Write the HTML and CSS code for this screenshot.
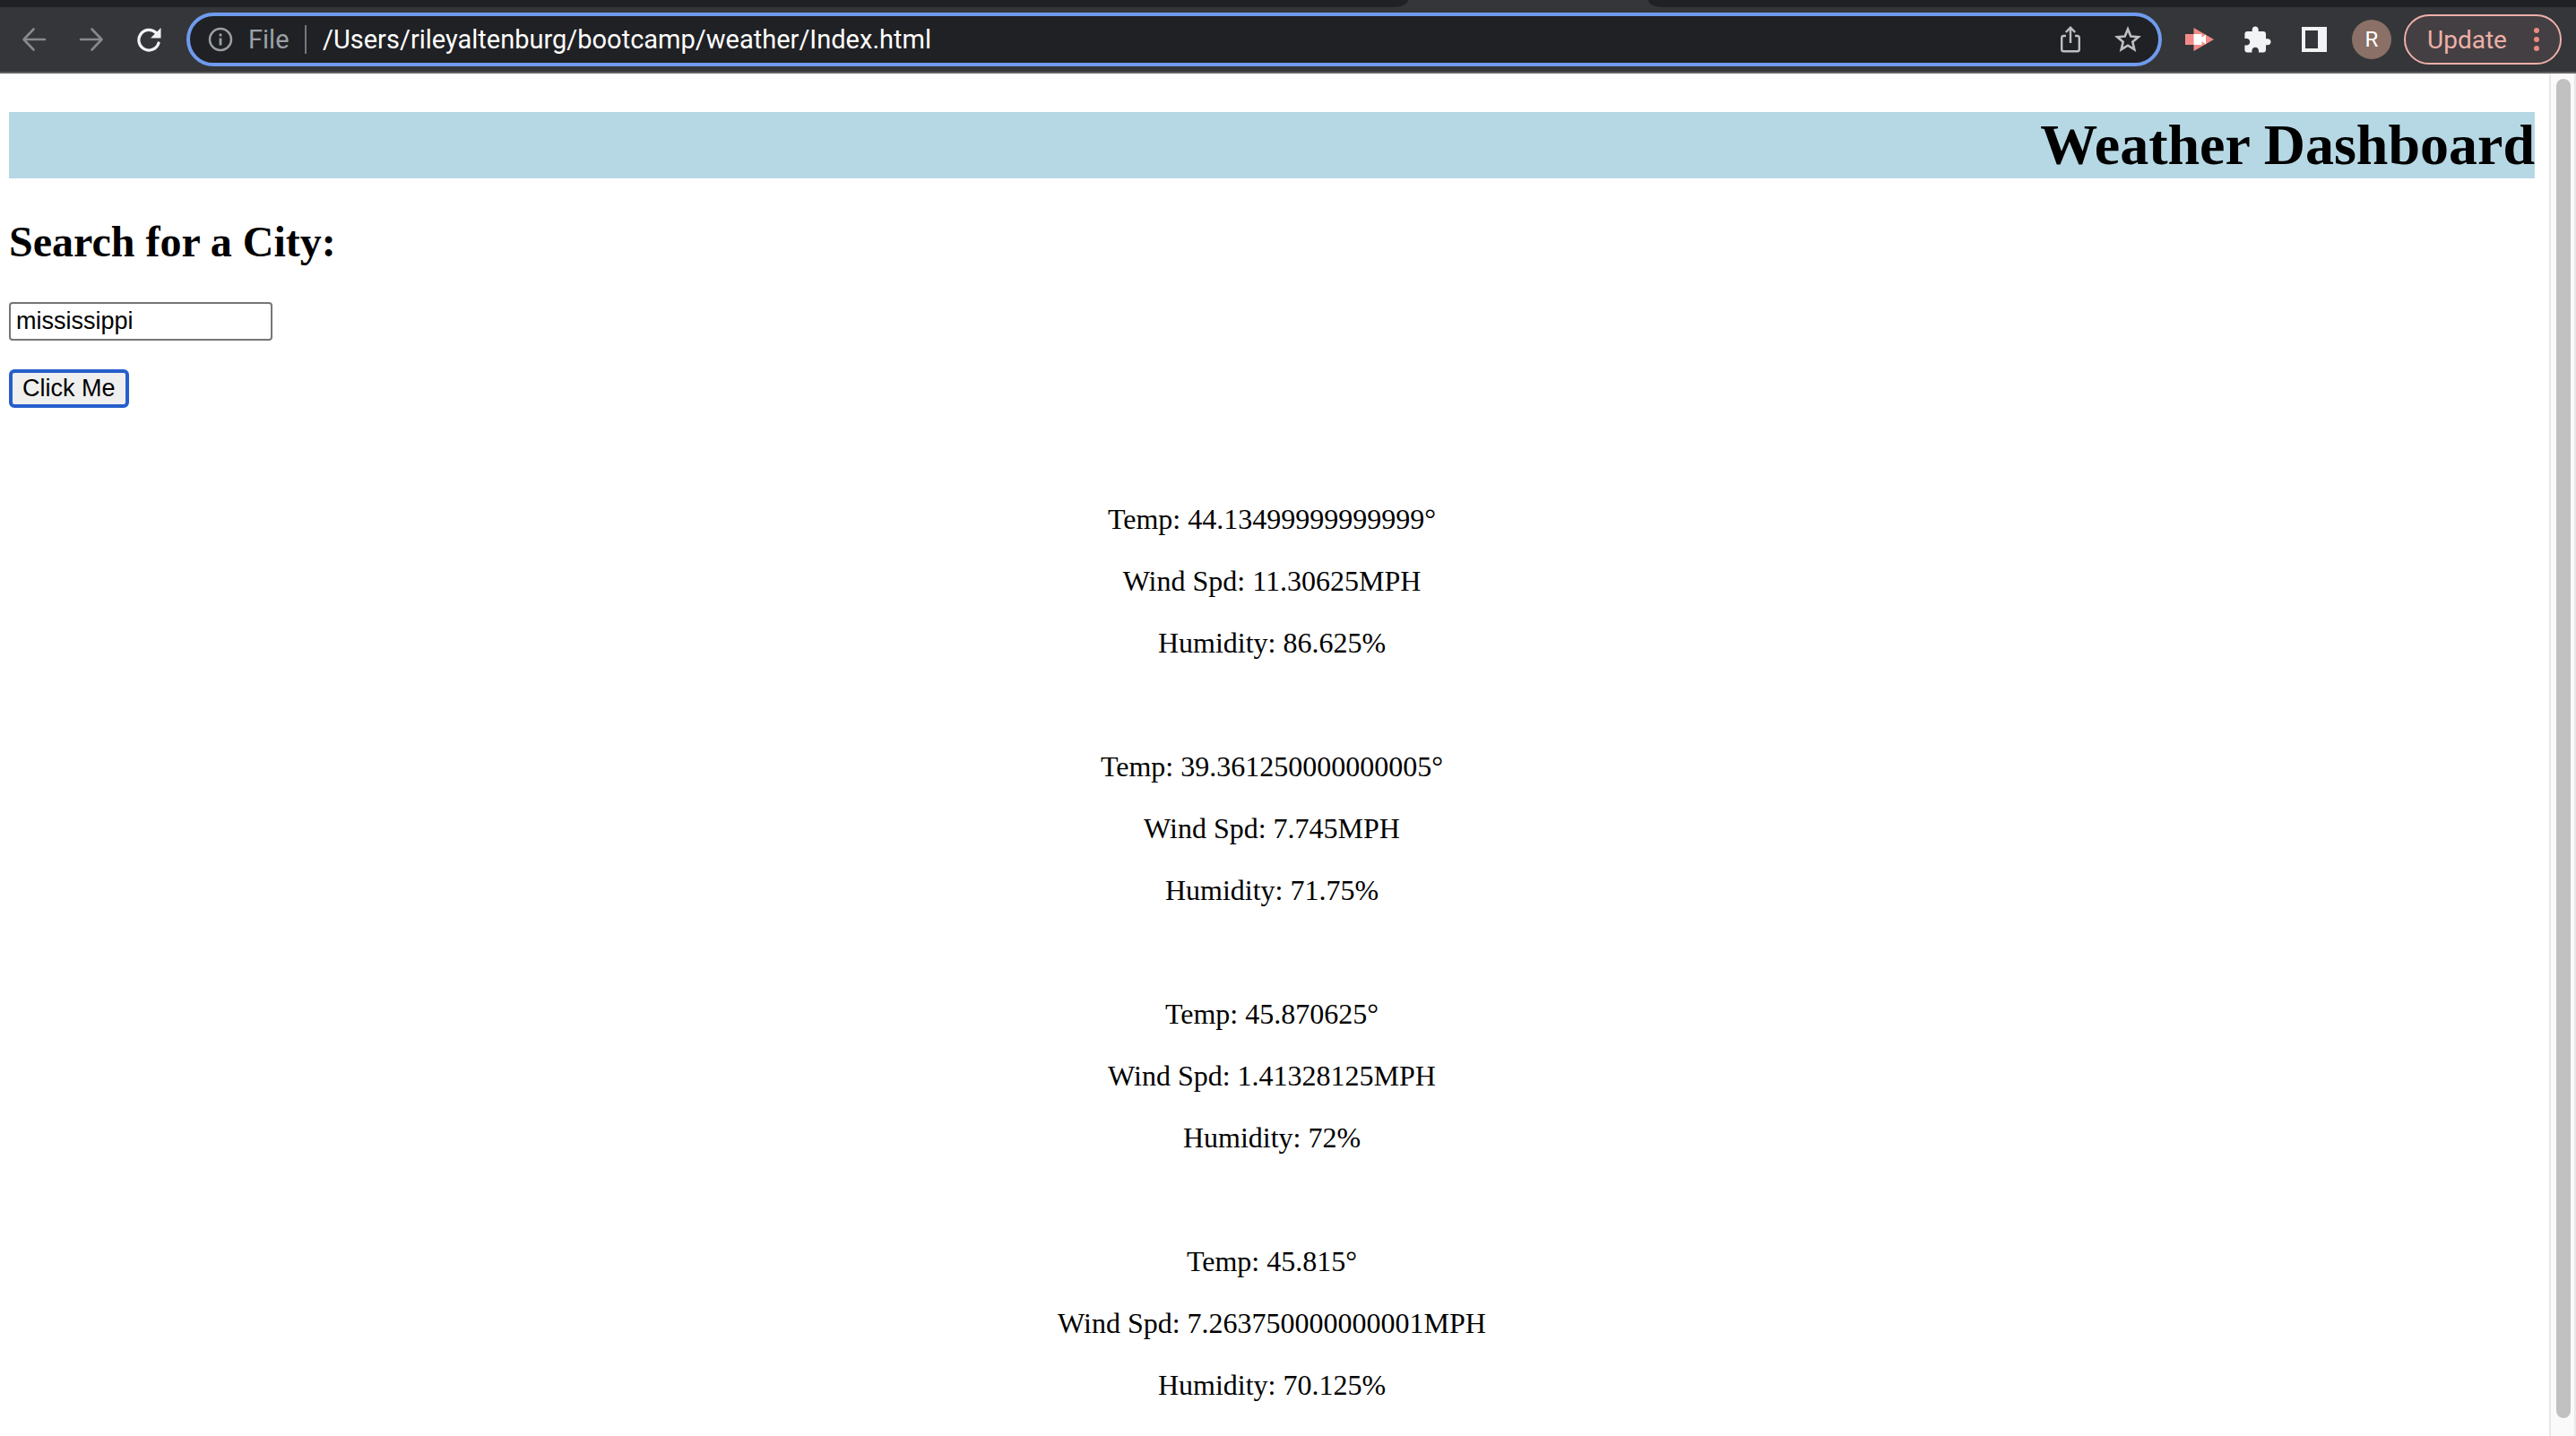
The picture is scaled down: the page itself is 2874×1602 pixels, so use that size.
FILE: index.html
```html
<!DOCTYPE html>
<html lang="en">
<head>
<meta charset="utf-8">
<title>Weather Dashboard</title>
<link rel="stylesheet" href="styles.css">
</head>
<body>
<div class="browser">
  <div class="tab-strip">
    <div class="tabs tabs-left"></div>
    <div class="tabs tabs-right"></div>
  </div>
  <header class="toolbar">
    <nav class="nav-buttons" aria-label="Navigation">
      <button class="icon-button" type="button" aria-label="Back" disabled>
        <svg width="28" height="28" viewBox="0 0 28 28" fill="none" stroke="#88898c" stroke-width="2.600" stroke-linecap="round" stroke-linejoin="round"><path d="M26 14H3M13.500 2.500L2.500 14L13.500 25.500"/></svg>
      </button>
      <button class="icon-button" type="button" aria-label="Forward" disabled>
        <svg width="28" height="28" viewBox="0 0 28 28" fill="none" stroke="#88898c" stroke-width="2.600" stroke-linecap="round" stroke-linejoin="round"><path d="M2 14H25M14.500 2.500L25.500 14L14.500 25.500"/></svg>
      </button>
      <button class="icon-button" type="button" aria-label="Reload">
        <svg width="28" height="28" viewBox="0 0 28 28"><path d="M22 6.500A11.300 11.300 0 1 0 25 18" fill="none" stroke="#f1f3f4" stroke-width="3.200" stroke-linecap="round"/><path d="M27.500 1V12.500H16Z" fill="#f1f3f4"/></svg>
      </button>
    </nav>
    <div class="omnibox">
      <svg class="info" width="28" height="28" viewBox="0 0 28 28"><circle cx="14" cy="14" r="12" fill="none" stroke="#9aa0a6" stroke-width="2.500"/><path d="M12.600 7.500h2.800v3h-2.800zM12.600 12.500h2.800v8h-2.800z" fill="#9aa0a6"/></svg>
      <label class="scheme" for="url">File</label>
      <span class="divider"></span>
      <input class="url" id="url" type="text" value="/Users/rileyaltenburg/bootcamp/weather/Index.html">
      <button class="icon-button" type="button" aria-label="Share">
        <svg width="28" height="32" viewBox="0 0 28 32" fill="none" stroke="#bdbec0" stroke-width="2.400"><path d="M9 12H6.500Q4.200 12 4.200 14.300V27Q4.200 29.300 6.500 29.300H21.500Q23.800 29.300 23.800 27V14.300Q23.800 12 21.500 12H19M14 20V3.500M8.800 8L14 2.800L19.200 8"/></svg>
      </button>
      <button class="icon-button" type="button" aria-label="Bookmark">
        <svg width="30" height="32" viewBox="0 0 30 32" fill="none" stroke="#bdbec0" stroke-width="2.600"><path d="M15 4.500L18.300 12.500L26.800 13.200L20.300 18.800L22.300 27.200L15 22.700L7.700 27.200L9.700 18.800L3.200 13.200L11.700 12.500Z"/></svg>
      </button>
    </div>
    <div class="extensions">
      <button class="icon-button" type="button" aria-label="Screen recorder">
        <svg width="32" height="28" viewBox="0 0 32 28"><path d="M0 8H10V20H0ZM9.500 1L32 14L9.500 27Z" fill="#f28b87"/><path d="M9.500 8H18.500V12L23 8.500V19.500L18.500 16V20H9.500Z" fill="#fff"/></svg>
      </button>
      <button class="icon-button" type="button" aria-label="Extensions">
        <svg width="32" height="32" viewBox="1 0 23 23" fill="#f1f3f4"><path d="M20.500 11H19V7c0-1.100-.9-2-2-2h-4V3.500C13 2.120 11.880 1 10.500 1S8 2.120 8 3.500V5H4c-1.100 0-1.990.9-1.990 2v3.800H3.500c1.490 0 2.700 1.210 2.700 2.700s-1.210 2.700-2.700 2.700H2V20c0 1.100.9 2 2 2h3.800v-1.500c0-1.490 1.210-2.700 2.700-2.700s2.700 1.210 2.700 2.700V22H17c1.100 0 2-.9 2-2v-4h1.500c1.380 0 2.500-1.120 2.500-2.500S21.880 11 20.500 11z"/></svg>
      </button>
      <button class="icon-button panel-button" type="button" aria-label="Side panel">
        <svg width="28" height="28" viewBox="0 0 28 28"><path d="M0 0H28V28H0ZM4 4V24H18V4Z" fill="#f1f3f4" fill-rule="evenodd"/></svg>
      </button>
      <button class="avatar" type="button" aria-label="Profile R">R</button>
      <button class="update" type="button"><span>Update</span>
        <svg width="6" height="28" viewBox="0 0 6 28" fill="#e98b80"><circle cx="3" cy="4" r="3"/><circle cx="3" cy="14" r="3"/><circle cx="3" cy="24" r="3"/></svg>
      </button>
    </div>
  </header>
  <div class="viewport">
    <main class="page">
      <h1 class="title">Weather Dashboard</h1>
      <h2 class="search-title"><label for="city">Search for a City:</label></h2>
      <form class="search">
        <input class="city" id="city" type="text" value="mississippi">
        <button class="search-button" type="button">Click Me</button>
      </form>
      <div class="forecast">
        <section class="day">
          <p>Temp: 44.13499999999999°</p>
          <p>Wind Spd: 11.30625MPH</p>
          <p>Humidity: 86.625%</p>
        </section>
        <section class="day">
          <p>Temp: 39.361250000000005°</p>
          <p>Wind Spd: 7.745MPH</p>
          <p>Humidity: 71.75%</p>
        </section>
        <section class="day">
          <p>Temp: 45.870625°</p>
          <p>Wind Spd: 1.41328125MPH</p>
          <p>Humidity: 72%</p>
        </section>
        <section class="day">
          <p>Temp: 45.815°</p>
          <p>Wind Spd: 7.263750000000001MPH</p>
          <p>Humidity: 70.125%</p>
        </section>
      </div>
    </main>
    <div class="scroll-track"><div class="scroll-thumb"></div></div>
  </div>
</div>
</body>
</html>
```
FILE: styles.css
```css
* {
  box-sizing: border-box;
}

body {
  margin: 0;
  background: #fff;
  color: #000;
  font-family: "Liberation Serif", "Times New Roman", serif;
}

button,
input {
  margin: 0;
  padding: 0;
  border: 0;
  background: none;
  font: inherit;
  color: inherit;
}

svg {
  display: block;
}

.browser {
  display: flex;
  flex-direction: column;
  min-height: 100vh;
}

/* Browser chrome */
.tab-strip {
  display: flex;
  justify-content: space-between;
  gap: 268px;
  height: 8px;
  background: #35363a;
}

.tabs {
  background: #202124;
}

.tabs-left {
  flex: 1571;
  border-bottom-right-radius: 16px 8px;
}

.tabs-right {
  flex: 1035;
  border-bottom-left-radius: 16px 8px;
}

.toolbar {
  display: flex;
  align-items: center;
  height: 74px;
  padding-right: 16px;
  border-bottom: 2px solid #645f65;
  background: #35363a;
  font-family: Roboto, sans-serif;
  font-size: 29px;
}

.nav-buttons {
  display: flex;
  gap: 36px;
  padding: 0 28px 0 24px;
}

.omnibox {
  flex: 1;
  display: flex;
  align-items: center;
  height: 60px;
  padding: 0 19px 0 20px;
  border: 4px solid #6f9bee;
  border-radius: 30px;
  background: #202124;
}

.scheme {
  width: 63px;
  margin-left: 17px;
  color: #9aa0a6;
}

.divider {
  width: 2px;
  height: 32px;
  margin-right: 18px;
  background: #74777b;
}

.url {
  flex: 1;
  min-width: 0;
  color: #fff;
  outline: none;
}

.omnibox .icon-button + .icon-button {
  margin-left: 35px;
}

.extensions {
  display: flex;
  align-items: center;
  padding-left: 26px;
}

.extensions .icon-button {
  margin-right: 33px;
}

.extensions .panel-button {
  margin-right: 28px;
}

.avatar {
  width: 44px;
  height: 44px;
  border-radius: 50%;
  background: #8a7066;
  color: #fff;
  font-size: 24px;
}

.update {
  display: flex;
  align-items: center;
  justify-content: space-between;
  width: 176px;
  height: 56px;
  margin-left: 14px;
  padding: 0 23px 0 24px;
  border: 2px solid #edb0a9;
  border-radius: 28px;
  background: #443f42;
  color: #edb0a9;
  font-size: 28px;
}

/* Page */
.viewport {
  flex: 1;
  display: flex;
}

.page {
  flex: 1;
  padding: 43px 16px 0 10px;
}

.title {
  margin: 0 0 43px;
  background: #b6d8e4;
  font-size: 64px;
  line-height: 74px;
  text-align: right;
}

.search-title {
  margin: 0 0 40px;
  font-size: 48px;
  line-height: 55px;
}

.search {
  display: flex;
  flex-direction: column;
  align-items: flex-start;
  gap: 32px;
  font-family: "Liberation Sans", Arial, sans-serif;
  font-size: 27px;
}

.city {
  width: 294px;
  height: 43px;
  padding: 0 6px;
  border: 2px solid #767676;
  border-radius: 4px;
}

.search-button {
  height: 43px;
  padding: 0 11px;
  border: 4px solid #265ecb;
  border-radius: 6px;
  background: #efefef;
  line-height: 35px;
}

.forecast {
  display: flex;
  flex-direction: column;
  gap: 101px;
  padding: 106px 0 32px;
  font-size: 32px;
  line-height: 37px;
  text-align: center;
}

.day {
  display: flex;
  flex-direction: column;
  gap: 32px;
}

.day p {
  margin: 0;
}

.scroll-track {
  display: flex;
  width: 30px;
  padding: 6px 4px 20px 6px;
  border: solid #e8e8e8;
  border-width: 0 2px;
  background: #fafafa;
}

.scroll-thumb {
  flex: 1;
  border-radius: 8px;
  background: #c1c1c1;
}
```
